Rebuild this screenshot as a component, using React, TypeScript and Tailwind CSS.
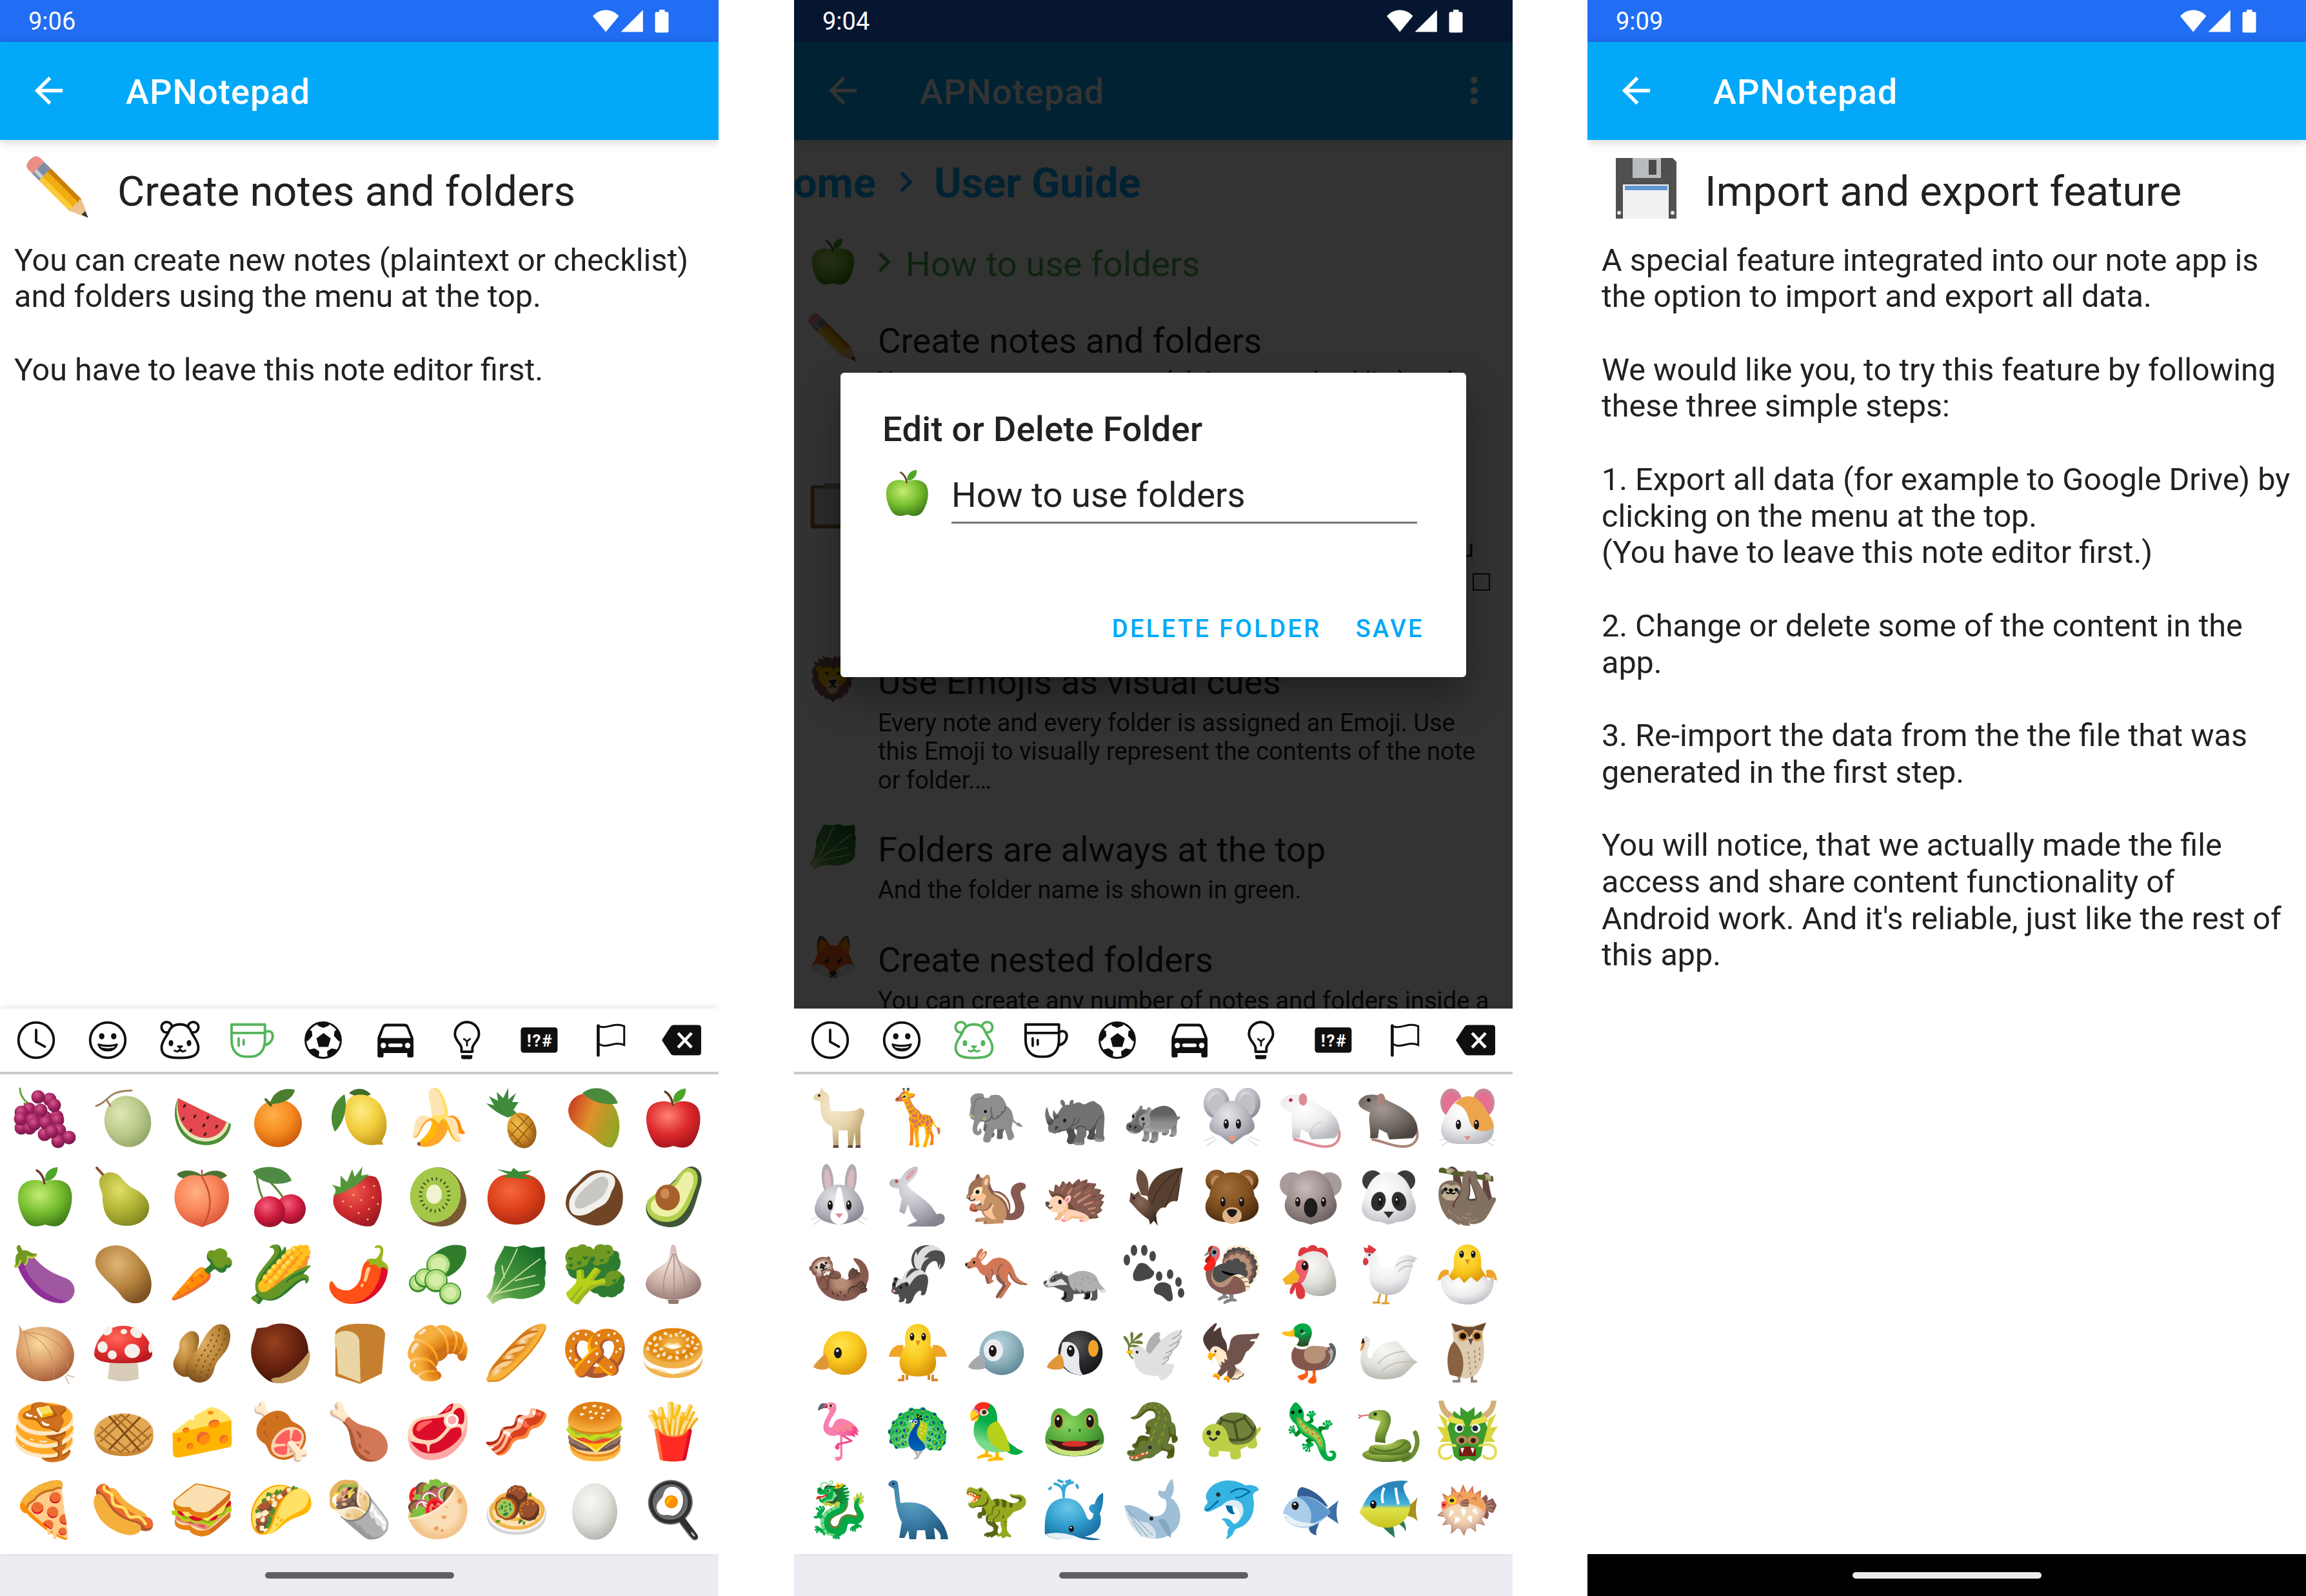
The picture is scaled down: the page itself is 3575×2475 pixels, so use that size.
import React from "react";

const FOOD = [
  "🍇", "🍈", "🍉", "🍊", "🍋", "🍌", "🍍", "🥭", "🍎",
  "🍏", "🍐", "🍑", "🍒", "🍓", "🥝", "🍅", "🥥", "🥑",
  "🍆", "🥔", "🥕", "🌽", "🌶️", "🥒", "🥬", "🥦", "🧄",
  "🧅", "🍄", "🥜", "🌰", "🍞", "🥐", "🥖", "🥨", "🥯",
  "🥞", "🧇", "🧀", "🍖", "🍗", "🥩", "🥓", "🍔", "🍟",
  "🍕", "🌭", "🥪", "🌮", "🌯", "🥙", "🧆", "🥚", "🍳",
];

const ANIMALS = [
  "🦙", "🦒", "🐘", "🦏", "🦛", "🐭", "🐁", "🐀", "🐹",
  "🐰", "🐇", "🐿️", "🦔", "🦇", "🐻", "🐨", "🐼", "🦥",
  "🦦", "🦨", "🦘", "🦡", "🐾", "🦃", "🐔", "🐓", "🐣",
  "🐤", "🐥", "🐦", "🐧", "🕊️", "🦅", "🦆", "🦢", "🦉",
  "🦩", "🦚", "🦜", "🐸", "🐊", "🐢", "🦎", "🐍", "🐲",
  "🐉", "🦕", "🦖", "🐳", "🐋", "🐬", "🐟", "🐠", "🐡",
];

/* Shading used by the drawn emoji: id, highlight, middle tone, edge tone. */
const SHADES: [string, string, string, string][] = [
  ["grape", "#d4588e", "#a3225f", "#6f1648"],
  ["melon", "#dfe6b4", "#bccb8c", "#90a565"],
  ["orange", "#ffb04a", "#f58a1f", "#c9590b"],
  ["lemon", "#fdec86", "#f2ce3b", "#c79c22"],
  ["pine", "#f6c24c", "#d18f27", "#8f5516"],
  ["redapple", "#ff8272", "#dd2a2c", "#a3131d"],
  ["greenapple", "#c4ec74", "#77be2e", "#3f7d1c"],
  ["pear", "#e0de6a", "#b3b536", "#83891f"],
  ["peach", "#ffb184", "#f88256", "#d65138"],
  ["cherry", "#f4617a", "#d11c40", "#8f0f28"],
  ["straw", "#ef5b50", "#d02c30", "#9c1a22"],
  ["tomato", "#f5683b", "#dc4019", "#a82a10"],
  ["potato", "#dfb678", "#b8843f", "#7d5323"],
  ["garlic", "#efdfd8", "#cdb2a9", "#967a75"],
  ["onion", "#fbdc9f", "#d99a68", "#a35a36"],
  ["mush", "#ff6a5a", "#e83232", "#b81a20"],
  ["nut", "#e0b065", "#b98436", "#74491a"],
  ["chestnut", "#96401f", "#6b2410", "#3f1208"],
  ["egg", "#f8f8f4", "#e2e1dc", "#b3b1ab"],
  ["mouse", "#e6e6ea", "#b9b8c0", "#86858f"],
  ["rat", "#a39a93", "#756d67", "#4b4541"],
  ["cream", "#f8ecd0", "#e6d3a8", "#b89d6c"],
  ["white", "#ffffff", "#ececee", "#b9b9bf"],
  ["bear", "#a36d3c", "#80501f", "#4e2d10"],
  ["bat", "#8b6a58", "#5e4438", "#36261f"],
  ["koala", "#c9bcba", "#9b8c8b", "#6c5f60"],
  ["yellow", "#ffe54d", "#f8c61d", "#d9930c"],
  ["bluebird", "#bcd6de", "#8db2bd", "#5c8593"],
  ["black", "#555759", "#2c2d2f", "#151617"],
  ["frog", "#8cd45f", "#55ac3c", "#347a2a"],
  ["whale", "#6cc7ea", "#2e9bca", "#17689c"],
  ["dino", "#62a5c8", "#3b7fa8", "#225a80"],
  ["snake", "#b5cc5c", "#7ea03a", "#4c6b20"],
];

function Shades() {
  return (
    <svg className="absolute" width="0" height="0">
      <defs>
        {SHADES.map(([id, a, b, c]) => (
          <radialGradient key={id} id={id} cx="0.4" cy="0.32" r="0.72">
            <stop offset="0" stopColor={a} />
            <stop offset="0.55" stopColor={b} />
            <stop offset="1" stopColor={c} />
          </radialGradient>
        ))}
        <linearGradient id="mango" x1="0" y1="0.2" x2="1" y2="0.6">
          <stop offset="0" stopColor="#c93a22" />
          <stop offset="0.45" stopColor="#e0902a" />
          <stop offset="1" stopColor="#8fa624" />
        </linearGradient>
        <linearGradient id="fish" x1="0" y1="0" x2="0" y2="1">
          <stop offset="0" stopColor="#1f85c4" />
          <stop offset="0.42" stopColor="#49b2dc" />
          <stop offset="0.52" stopColor="#dfe24a" />
          <stop offset="1" stopColor="#c9c41f" />
        </linearGradient>
        <linearGradient id="leaf" x1="0" y1="1" x2="1" y2="0">
          <stop offset="0" stopColor="#cfe0a4" />
          <stop offset="0.3" stopColor="#4f9d3f" />
          <stop offset="1" stopColor="#0c6322" />
        </linearGradient>
      </defs>
    </svg>
  );
}

function Eye({ x, y, rx = 4, ry = 7.5 }: { x: number; y: number; rx?: number; ry?: number }) {
  return (
    <g>
      <ellipse cx={x} cy={y} rx={rx} ry={ry} fill="#1b1716" />
      <ellipse cx={x - 0.8} cy={y - ry * 0.4} rx={rx * 0.35} ry={ry * 0.25} fill="#ffffff" />
    </g>
  );
}

function Apple({ fill }: { fill: string }) {
  return (
    <g>
      <path d="M47 25C36 18 18 20 10 30 1 42 5 66 15 82 23 95 34 94 47 90 60 94 71 95 79 82 89 66 92 42 84 30 76 20 58 18 47 25Z" fill={`url(#${fill})`} />
      <path d="M46 26C45 17 40 9 34 6" stroke="#6b3d22" strokeWidth="3.5" fill="none" strokeLinecap="round" />
      <path d="M47 23C45 10 54 2 66 1 67 12 60 22 47 23Z" fill="#4ea52a" />
    </g>
  );
}

function Rodent({ fill, eye, tail }: { fill: string; eye: string; tail: string }) {
  return (
    <g>
      <path d="M22 80C42 84 60 94 78 90 90 86 94 76 90 64" stroke={tail} strokeWidth="4" fill="none" strokeLinecap="round" />
      <path d="M0 23C4 12 16 8 32 12 46 22 70 28 84 44 94 58 94 70 84 78L48 80 44 70 32 64 30 78 18 78C20 62 14 50 18 38 8 34 0 30 0 23Z" fill={`url(#${fill})`} />
      <path d="M46 78C46 62 54 54 66 52" stroke="#8888882f" strokeWidth="2.5" fill="none" />
      <ellipse cx="35" cy="18" rx="6.5" ry="9.5" fill={tail} />
      <circle cx="16" cy="19" r="2.8" fill={eye} />
    </g>
  );
}

const whiskers = <path d="M20 76 3 82M22 80 7 90M74 76 91 82M72 80 87 90" stroke="#cfcfcf" strokeWidth="1.3" />;

const ART: Record<string, React.ReactNode> = {
  "🍇": (
    <g>
      <path d="M8 1C8 15 18 24 34 32M15 24 18 34" stroke="#6ba33b" strokeWidth="3" fill="none" strokeLinecap="round" />
      {[[23, 33], [11, 38], [48, 46], [66, 45], [55, 18], [37, 14], [62, 27], [41, 35], [11, 62], [24, 62], [10, 48], [28, 50], [47, 72], [31, 56], [49, 54], [67, 50], [70, 66], [85, 77], [68, 83], [58, 68]].map(([x, y]) => (
        <circle key={`${x}-${y}`} cx={x - 1} cy={y} r="10.5" fill="url(#grape)" />
      ))}
    </g>
  ),
  "🍈": (
    <g>
      <ellipse cx="53" cy="52" rx="36" ry="40" transform="rotate(-15 53 52)" fill="url(#melon)" />
      <path d="M4 28C15 26 22 14 32 9S52 5 59 4M20 18 26 28" stroke="#a5805a" strokeWidth="3" fill="none" strokeLinecap="round" />
    </g>
  ),
  "🍉": (
    <g>
      <path d="M10 16 92 56C90 82 62 96 34 85 8 74-2 42 10 16Z" fill="#4d8f38" />
      <path d="M10 16 89 55C84 78 60 89 36 80 12 70 3 42 10 16Z" fill="#e6e6b8" />
      <path d="M10 16 85 53C79 73 59 83 39 75 17 66 6 42 10 16Z" fill="#e5484f" />
      {[[20, 28], [18, 48], [36, 44], [56, 46], [50, 58], [30, 66], [52, 72], [70, 60]].map(([x, y]) => (
        <ellipse key={`${x}-${y}`} cx={x} cy={y} rx="1.8" ry="3.2" fill="#4a1a1c" transform={`rotate(30 ${x} ${y})`} />
      ))}
    </g>
  ),
  "🍊": (
    <g>
      <circle cx="43" cy="55" r="37" fill="url(#orange)" />
      <path d="M31 25C33 8 50-2 69 3 67 16 52 25 31 25Z" fill="#4b7e2f" />
      <path d="M24 18 32 27" stroke="#3f6b26" strokeWidth="4" strokeLinecap="round" />
    </g>
  ),
  "🍋": (
    <g>
      <path d="M31 8C42-2 56 0 65 10 54 16 42 15 31 8Z" fill="#3f6d2a" />
      <path d="M34 14C50 6 72 12 82 30 92 48 92 68 82 82L84 88 74 88C56 92 38 82 29 62 22 44 22 24 34 14Z" fill="url(#lemon)" />
      <path d="M24 10C6 22-2 44 9 68 22 56 30 32 24 10Z" fill="#4b8a34" />
    </g>
  ),
  "🍍": (
    <g>
      <path d="M34 46C20 42 8 32 0 24L12 27 4 13 18 20 16 6 26 16 34 0 34 18 46 8 40 22 50 22 42 34 48 40Z" fill="#3f8a3d" />
      <ellipse cx="55" cy="66" rx="22" ry="28" transform="rotate(-18 55 66)" fill="url(#pine)" />
      <path d="M38 52 70 84M48 42 76 70M34 66 58 92M44 88 72 54M36 76 66 44" stroke="#8f5a17" strokeWidth="1.5" />
    </g>
  ),
  "🥭": (
    <g>
      <path d="M26 10C46 2 70 14 80 34 88 52 88 76 74 92 60 94 52 82 38 72 20 62 6 52 6 34 8 20 16 13 26 10Z" fill="url(#mango)" />
      <path d="M28 8C46-6 74 0 83 24 62 28 42 22 28 8Z" fill="#4a8a3c" />
    </g>
  ),
  "🍎": <Apple fill="redapple" />,
  "🍏": <Apple fill="greenapple" />,
  "🍐": (
    <g>
      <path d="M10 18C16 8 30 6 40 14 48 22 52 30 66 36 84 46 92 62 82 78 72 92 50 96 32 88 16 78 14 60 14 46 13 36 6 28 10 18Z" fill="url(#pear)" />
      <path d="M14 12 5 2" stroke="#8a4f2d" strokeWidth="4" strokeLinecap="round" />
    </g>
  ),
  "🍑": (
    <g>
      <path d="M47 14C36 4 16 4 8 12 16 22 34 22 47 14ZM47 14C58 4 78 4 86 14 74 24 58 22 47 14Z" fill="#4c7330" />
      <path d="M47 16C34 10 16 14 8 30 0 50 6 74 26 86L47 94 68 86C88 74 93 50 86 30 78 14 60 10 47 16Z" fill="url(#peach)" />
      <path d="M47 5V16C62 40 64 66 49 92" stroke="#c84e32" strokeWidth="2.5" fill="none" />
    </g>
  ),
  "🍒": (
    <g>
      <path d="M10 12C12 36 18 46 22 56M20 14C36 28 46 40 52 50" stroke="#5c8a35" strokeWidth="3" fill="none" />
      <path d="M4 8C20-4 56-2 64 22 42 32 14 26 4 8Z" fill="#4f8a45" />
      <circle cx="63" cy="66" r="23" fill="url(#cherry)" />
      <circle cx="30" cy="70" r="24" fill="url(#cherry)" />
    </g>
  ),
  "🍓": (
    <g>
      <path d="M14 36C32 20 62 8 74 18 86 36 84 72 70 90 60 98 32 88 14 72 4 60 4 46 14 36Z" fill="url(#straw)" />
      <path d="M6 46C12 40 12 34 4 28L18 32 18 14 28 24 36 4 40 16 52 0 50 14 62 12C50 26 30 38 6 46Z" fill="#54963a" />
      {[[22, 54], [38, 44], [54, 32], [70, 30], [34, 62], [50, 52], [68, 48], [46, 72], [62, 66], [76, 58], [60, 82]].map(([x, y]) => (
        <circle key={`${x}-${y}`} cx={x} cy={y} r="1.5" fill="#f5c06a" />
      ))}
    </g>
  ),
  "🥝": (
    <g>
      <path d="M40 2C66-4 88 22 91 52 92 76 74 94 50 93 34 92 20 84 14 74Z" fill="#7a5a35" />
      <ellipse cx="43" cy="44" rx="39" ry="43" transform="rotate(16 43 44)" fill="#a5c84a" />
      <ellipse cx="42" cy="44" rx="22" ry="25" fill="none" stroke="#3f4d1c" strokeWidth="5" strokeDasharray="2 5" />
      <ellipse cx="41" cy="43" rx="12" ry="15" fill="#f1f3d0" />
    </g>
  ),
  "🍅": (
    <g>
      <path d="M46 14C66 8 88 18 91 44 93 74 70 90 46 90S-1 74 2 44C5 18 26 8 46 14Z" fill="url(#tomato)" />
      <path d="M46 18 24 16 34 12 16 4 38 8 42 2 50 8 70 6 58 14 72 20Z" fill="#3f8a34" />
    </g>
  ),
  "🥥": (
    <g>
      <path d="M60 6C84 8 94 34 90 58 84 86 58 98 34 88 12 80 2 70 2 56 4 34 14 34 24 22 36 8 48 4 60 6Z" fill="#6f4526" />
      <path d="M66 10C78 12 82 22 76 34 70 42 72 54 56 62 42 68 38 76 22 76 8 76 6 62 8 52 14 36 24 28 36 18 46 10 56 8 66 10Z" fill="#f2f0ec" />
      <path d="M62 16C72 20 68 32 64 38 60 50 48 54 38 60 28 66 18 68 16 60 16 46 28 36 40 26 48 20 54 14 62 16Z" fill="#c9c7c3" />
    </g>
  ),
  "🥑": (
    <g>
      <path d="M76 0C90 2 94 18 88 34 80 58 76 92 44 94 16 94-4 74 8 52 22 38 34 36 50 20 58 8 66 0 76 0Z" fill="#3f5538" />
      <path d="M72 2C84 4 88 16 82 32 74 54 66 84 38 86 10 86 0 66 8 52 20 38 36 36 50 22 56 10 64 2 72 2Z" fill="#b3cf4c" />
      <path d="M70 8C79 10 80 20 76 32 66 54 60 76 36 78 14 76 8 64 14 54 26 42 40 40 54 26 60 14 64 8 70 8Z" fill="#edf0a6" />
      <ellipse cx="38" cy="48" rx="19" ry="20" fill="#a5602c" />
      <ellipse cx="34" cy="42" rx="7" ry="8" fill="#cf8c52" />
    </g>
  ),
  "🥔": <path d="M20 4C42-4 60 6 74 24 90 40 96 70 82 84 70 96 50 92 42 78 30 62 12 52 4 34 0 20 8 8 20 4Z" fill="url(#potato)" />,
  "🥒": (
    <g>
      <path d="M34 22C50 2 74-4 90 4 94 20 84 40 62 50Z" fill="#2f7d2c" />
      {[[48, 32, 19], [16, 60, 14], [26, 52, 15], [44, 56, 18], [66, 76, 17]].map(([x, y, r]) => (
        <g key={`${x}-${y}`}>
          <ellipse cx={x} cy={y} rx={r} ry={r} fill="#3f8c2f" />
          <ellipse cx={x} cy={y - 1} rx={r - 2} ry={r - 2.5} fill="#b4de82" />
          <ellipse cx={x} cy={y - 1} rx={r - 7} ry={r - 7.5} fill="#d3eda6" />
        </g>
      ))}
    </g>
  ),
  "🥬": (
    <g>
      <path d="M28 2 46 4 58 1 70 5 90 3C92 14 88 20 93 28 90 36 94 44 90 52 92 60 92 68 84 74 76 80 60 86 48 84 36 82 22 82 10 93L0 80C14 66 8 56 14 44 8 32 24 14 28 2Z" fill="url(#leaf)" />
      <path d="M6 86C20 62 36 36 48 6M12 78C36 60 62 36 84 22M14 76C40 70 60 66 82 62M28 52 24 32M44 56 76 48" stroke="#c8dca0" strokeWidth="2" fill="none" />
    </g>
  ),
  "🧄": (
    <g>
      <path d="M46 0C54 2 50 14 56 24 66 36 90 42 90 62 88 78 70 84 47 86 24 84 6 78 4 62 4 42 30 36 38 24 44 14 40 4 46 0Z" fill="url(#garlic)" />
      <path d="M46 14C40 34 26 50 34 84M50 14C56 34 70 50 62 84M48 14V86" stroke="#a88a86" strokeWidth="1.5" fill="none" />
      <path d="M38 86H56L54 92H40Z" fill="#8f7a6a" />
    </g>
  ),
  "🧅": (
    <g>
      <path d="M6 2 12 12 24 8C60-2 90 18 92 48 92 74 70 90 46 90 20 90 2 70 2 46 2 32 10 20 6 2Z" fill="url(#onion)" />
      <path d="M14 14C44 24 66 50 60 88M14 14C22 40 24 64 34 88M14 14C56 14 84 40 82 70" stroke="#c98a5c" strokeWidth="1.1" fill="none" />
      <path d="M80 80 92 84M78 82 84 94" stroke="#c9b39c" strokeWidth="1.5" />
    </g>
  ),
  "🍄": (
    <g>
      <path d="M26 54H68L70 86Q48 94 22 86Z" fill="#d8cbb8" />
      <path d="M46 4C72 4 90 26 91 48 90 60 70 62 46 62S2 60 1 48C2 26 20 4 46 4Z" fill="url(#mush)" />
      <ellipse cx="22" cy="12" rx="8" ry="6" fill="#f5f0ea" transform="rotate(-40 22 12)" />
      <ellipse cx="47" cy="13" rx="5" ry="4" fill="#f5f0ea" />
      <ellipse cx="66" cy="15" rx="10" ry="7" fill="#f5f0ea" transform="rotate(35 66 15)" />
      <ellipse cx="14" cy="37" rx="8" ry="9" fill="#f5f0ea" />
      <ellipse cx="60" cy="43" rx="12" ry="11" fill="#f5f0ea" />
      <circle cx="29" cy="49" r="7" fill="#f5f0ea" />
      <ellipse cx="88" cy="38" rx="3" ry="8" fill="#f5f0ea" />
    </g>
  ),
  "🥜": (
    <g>
      <path d="M20 18C32 6 46 14 42 32 38 48 34 52 36 70 32 88 14 86 6 74-4 58 12 48 12 36 12 28 14 24 20 18Z" fill="url(#nut)" />
      <path d="M62 8C76-6 96 4 90 28 86 50 70 52 66 72 60 96 34 98 24 80 14 60 34 50 42 38 48 28 50 20 62 8Z" fill="url(#nut)" />
      <path d="M74 8C74 36 50 46 44 86M84 14C80 44 58 54 54 86M64 16C60 38 40 50 34 80" stroke="#7c4f1c" strokeWidth="2" strokeDasharray="4 5" fill="none" />
    </g>
  ),
  "🌰": (
    <g>
      <path d="M10 8 26 6C44-4 70 0 82 16 92 30 94 60 82 76 66 92 46 96 30 90 10 78-2 58 2 34Z" fill="url(#chestnut)" />
      <path d="M92 42C96 66 78 94 42 93 28 90 30 84 44 84 62 78 80 60 92 42Z" fill="#c29a5c" />
    </g>
  ),
  "🍞": (
    <g>
      <path d="M10 14C14 4 34 0 50 1 70 0 88 6 87 18L82 78 48 94 10 82Z" fill="#c57f2f" />
      <path d="M10 18C18 8 44 10 47 26L49 92 14 78 12 40Q6 28 10 18Z" fill="#e9d6a4" />
    </g>
  ),
  "🧇": (
    <g>
      <path d="M1 48C2 76 20 84 47 84S93 74 93 50Z" fill="#c98a37" />
      <ellipse cx="47" cy="48" rx="46" ry="30" fill="#e2a853" />
      <path d="M32 22 78 66M42 19 86 58M10 38 56 78M6 50 42 78M56 19 10 62M44 19 5 54M88 38 42 78M90 50 60 78" stroke="#a86a28" strokeWidth="2.5" />
      <path d="M24 22 72 76M72 24 24 74" stroke="#7c4a18" strokeWidth="3" />
    </g>
  ),
  "🥚": <ellipse cx="47" cy="49" rx="35" ry="44" fill="url(#egg)" />,
  "💾": (
    <g>
      <path d="M0 0H88L94 6V94H0Z" fill="#50504e" />
      <path d="M26 0H70V31H26Z" fill="#b9bcbf" />
      <path d="M51 3H63V26H51Z" fill="#4a4a48" />
      <path d="M11 41H82V94H11Z" fill="#f1f1f1" />
      <path d="M14 43H80V50H14Z" fill="#5f97d0" />
      <circle cx="5" cy="85" r="3" fill="#e8e8e8" />
      <circle cx="88" cy="85" r="3" fill="#e8e8e8" />
    </g>
  ),
  "✏️": (
    <g transform="rotate(-45 47 47)">
      <path d="M34-6Q34-16 47-16T60-6V2H34Z" fill="#ec8d86" />
      <path d="M34 2H60V17H34Z" fill="#7e8ea0" />
      <path d="M38 2H44V17H38Z" fill="#c2ccd6" />
      <path d="M34 17H60V84H34Z" fill="#f0ae12" />
      <path d="M34 17H42V84H34Z" fill="#fbc93a" />
      <path d="M53 17H60V84H53Z" fill="#c97f08" />
      <path d="M34 84Q38 80 42 84 47 80 53 84 57 80 60 84L50 106H44Z" fill="#ebc48d" />
      <path d="M43 101H51L47 112Z" fill="#333333" />
    </g>
  ),
  "📋": (
    <g>
      <rect x="2" y="6" width="90" height="86" rx="4" fill="#8f6a34" />
      <rect x="10" y="12" width="74" height="72" fill="#d8d8d8" />
      <rect x="28" y="2" width="38" height="12" rx="3" fill="#9a9a9a" />
    </g>
  ),
  "🦙": (
    <g>
      <path d="M19 0 24 6C32 8 33 16 32 24L34 35C46 37 60 37 72 35 78 33 80 28 86 36 86 44 82 50 80 62L80 91H73L71 68 68 91H61L60 66 46 66 46 91H38L36 60C22 54 18 44 18 22L8 18C5 14 10 8 17 7Z" fill="url(#cream)" />
      <circle cx="16" cy="12" r="2" fill="#2a211a" />
      <path d="M38 89H46V93H37ZM61 89H68V93H60ZM73 89H80V93H72Z" fill="#5a4a38" />
    </g>
  ),
  "🐭": (
    <g>
      <ellipse cx="23" cy="24" rx="20" ry="24" fill="url(#mouse)" />
      <ellipse cx="71" cy="24" rx="20" ry="24" fill="url(#mouse)" />
      <ellipse cx="24" cy="27" rx="13" ry="17" fill="#c4bfc6" />
      <ellipse cx="70" cy="27" rx="13" ry="17" fill="#c4bfc6" />
      {whiskers}
      <path d="M47 20C60 20 70 32 76 44 86 60 84 68 66 74L47 88 28 74C10 68 8 60 18 44 24 32 34 20 47 20Z" fill="url(#mouse)" />
      <Eye x={38} y={56} />
      <Eye x={57} y={56} />
      <ellipse cx="47" cy="78" rx="5" ry="4.5" fill="#e79a80" />
    </g>
  ),
  "🐁": <Rodent fill="white" eye="#c42a3c" tail="#dd8b92" />,
  "🐀": <Rodent fill="rat" eye="#1c1816" tail="#a98578" />,
  "🐹": (
    <g>
      <ellipse cx="22" cy="23" rx="17" ry="22" fill="#c9869a" />
      <ellipse cx="72" cy="23" rx="17" ry="22" fill="#c9869a" />
      <ellipse cx="22" cy="25" rx="13" ry="18" fill="#e5708f" />
      <ellipse cx="72" cy="25" rx="13" ry="18" fill="#e5708f" />
      {whiskers}
      <path d="M47 14C64 14 74 30 80 42 94 62 90 86 62 87H32C4 86 0 62 14 42 20 30 30 14 47 14Z" fill="url(#white)" />
      <path d="M28 24C40 8 60 10 70 26 78 40 88 48 88 62 78 68 64 70 54 60 46 46 50 32 28 24Z" fill="#eda54c" />
      <Eye x={33} y={57} />
      <Eye x={61} y={57} />
      <path d="M42 75H52L47 82Z" fill="#df8a8a" />
    </g>
  ),
  "🐰": (
    <g>
      <ellipse cx="29" cy="20" rx="9" ry="24" fill="#b4abb0" transform="rotate(-6 29 20)" />
      <ellipse cx="65" cy="20" rx="9" ry="24" fill="#b4abb0" transform="rotate(6 65 20)" />
      <ellipse cx="29" cy="22" rx="5" ry="18" fill="#dcb9bf" transform="rotate(-6 29 22)" />
      <ellipse cx="65" cy="22" rx="5" ry="18" fill="#dcb9bf" transform="rotate(6 65 22)" />
      {whiskers}
      <path d="M47 28C68 28 82 46 85 64 86 82 66 88 47 90 28 88 8 82 9 64 12 46 26 28 47 28Z" fill="url(#mouse)" />
      <path d="M44 34Q47 30 50 34L56 66C64 74 62 88 47 90 32 88 30 74 38 66Z" fill="#ffffff" />
      <Eye x={33} y={60} />
      <Eye x={62} y={60} />
      <path d="M41 73H53L47 80Z" fill="#d98a93" />
    </g>
  ),
  "🐇": (
    <g>
      <path d="M20 20C26 8 34 0 46 0 50 10 38 22 30 28 38 40 56 48 68 62L76 74C88 70 92 80 86 88L74 93H30C34 88 40 88 46 84 36 76 34 66 32 58L26 74 18 70 22 50C18 44 18 38 18 34 8 34 0 30 4 22 8 18 14 18 20 20Z" fill="url(#mouse)" />
      <path d="M28 18C32 10 38 5 43 4 42 12 36 18 30 22Z" fill="#e0a0a4" />
      <circle cx="14" cy="23" r="2.5" fill="#c1453f" />
    </g>
  ),
  "🦇": (
    <g>
      <path d="M24 4C38 8 42 26 38 46L28 44C24 28 16 22 24 4Z" fill="#6b4f40" />
      <path d="M38 44C42 18 60 4 92 2 86 20 88 34 84 54 76 52 70 56 66 64 58 62 54 68 50 78L40 66Z" fill="#57402f" />
      <path d="M92 2C70 14 52 34 44 60M92 2C84 22 74 40 66 62M92 2 84 52" stroke="#3a291f" strokeWidth="1.5" fill="none" />
      <path d="M12 40 18 44 24 38 28 46C40 50 52 66 52 82L54 92 48 84 42 90 40 82C26 74 18 62 10 54Z" fill="url(#bat)" />
      <circle cx="17" cy="49" r="1.8" fill="#120d0a" />
    </g>
  ),
  "🐻": (
    <g>
      <circle cx="23" cy="22" r="17" fill="url(#bear)" />
      <circle cx="71" cy="22" r="17" fill="url(#bear)" />
      <circle cx="24" cy="24" r="10" fill="#b98a5c" />
      <circle cx="70" cy="24" r="10" fill="#b98a5c" />
      <path d="M47 9C70 9 80 28 82 46 94 62 90 82 60 86H34C4 82 0 62 12 46 14 28 24 9 47 9Z" fill="url(#bear)" />
      <ellipse cx="47" cy="76" rx="15" ry="13" fill="#dcb487" />
      <Eye x={33} y={55} />
      <Eye x={62} y={55} />
      <path d="M39 68Q47 64 55 68 54 76 47 79 40 76 39 68Z" fill="#1b1716" />
    </g>
  ),
  "🐨": (
    <g>
      <circle cx="18" cy="28" r="19" fill="#a89b9b" />
      <circle cx="76" cy="28" r="19" fill="#a89b9b" />
      <path d="M47 6C70 6 82 28 84 48 94 66 80 84 60 86L47 90 34 86C14 84 0 66 10 48 12 28 24 6 47 6Z" fill="url(#koala)" />
      <Eye x={27} y={55} />
      <Eye x={67} y={55} />
      <ellipse cx="47" cy="64" rx="10.5" ry="15" fill="#1e1c1d" />
    </g>
  ),
  "🐼": (
    <g>
      <circle cx="22" cy="22" r="16" fill="#3c3c3e" />
      <circle cx="72" cy="22" r="16" fill="#3c3c3e" />
      <path d="M47 9C70 9 80 28 84 46 94 66 90 84 60 86L47 90 34 86C4 84 0 66 10 46 14 28 24 9 47 9Z" fill="url(#white)" />
      <ellipse cx="31" cy="54" rx="11" ry="15" fill="#2e2e30" transform="rotate(15 31 54)" />
      <ellipse cx="63" cy="54" rx="11" ry="15" fill="#2e2e30" transform="rotate(-15 63 54)" />
      <Eye x={34} y={54} />
      <Eye x={60} y={54} />
      <path d="M39 70H55L47 80Z" fill="#2e2e30" />
    </g>
  ),
  "🐾": (
    <g fill="#474747">
      <path d="M22 32C26 26 36 28 40 34L48 42C50 48 42 54 36 54 28 58 16 58 16 52 14 44 18 40 22 32Z" />
      <ellipse cx="6" cy="24" rx="5" ry="8.5" />
      <ellipse cx="17" cy="9" rx="5" ry="8.5" />
      <ellipse cx="33" cy="9" rx="5" ry="8.5" />
      <ellipse cx="46" cy="18" rx="5" ry="8" />
      <path d="M52 62C58 56 70 58 74 64L76 74C78 82 78 88 72 88 66 88 64 80 56 78 46 76 46 68 52 62Z" />
      <ellipse cx="56" cy="49" rx="5" ry="7.5" />
      <ellipse cx="73" cy="46" rx="5" ry="7.5" />
      <ellipse cx="86" cy="58" rx="5" ry="7.5" />
      <ellipse cx="90" cy="75" rx="5" ry="7.5" />
    </g>
  ),
  "🐔": (
    <g>
      <path d="M28 18C26 8 34 0 42 6 46-2 56 0 58 6 66 2 74 8 74 20Z" fill="#e0393f" />
      <path d="M26 26C34 8 62 4 74 22 84 38 90 60 84 72 70 84 46 82 34 70 22 56 20 40 26 26Z" fill="url(#egg)" />
      <path d="M26 26C40 18 48 30 42 44 38 56 34 62 28 60 20 50 22 36 26 26Z" fill="#ec6069" />
      <path d="M22 38 3 54 8 62 24 62 30 50Z" fill="#f1b527" />
      <path d="M20 60C10 74 16 82 20 74L24 66C22 84 32 90 38 80 40 70 34 64 30 58Z" fill="#e0393f" />
      <Eye x={38} y={33} rx={5} ry={7} />
    </g>
  ),
  "🐓": (
    <g>
      <path d="M34 76 30 90M44 76 42 90M22 90H34M36 91H48" stroke="#e09a2c" strokeWidth="3" fill="none" />
      <path d="M10 14C18 8 28 12 30 22 34 36 44 42 58 30 62 16 76 12 92 22 82 24 86 34 80 46 78 66 62 80 44 78 22 76 14 58 18 38Z" fill="url(#white)" />
      <path d="M58 34C64 26 76 22 88 26M62 42C68 34 76 32 84 34" stroke="#b8b8bd" strokeWidth="1.5" fill="none" />
      <path d="M10 12 8 4 14 6 16 0 22 4 28 8 22 14ZM10 20C4 26 8 34 12 32 18 28 16 22 10 20Z" fill="#dd3a40" />
      <circle cx="17" cy="16" r="1.8" fill="#222222" />
    </g>
  ),
  "🐣": (
    <g>
      <path d="M18 40C8 36 2 44 1 56L18 50ZM76 40C86 36 92 44 93 56L76 50Z" fill="#f0a52a" />
      <path d="M16 60C16 46 26 42 26 32 24 10 34 0 47 0S70 10 68 32C68 42 78 46 78 60Z" fill="url(#yellow)" />
      <path d="M6 52 16 46 24 56 34 50 42 60 52 50 62 58 72 48 80 56 88 50C90 78 70 93 47 93S4 78 6 52Z" fill="url(#white)" />
      <Eye x={38} y={15} rx={3.5} ry={5.5} />
      <Eye x={56} y={15} rx={3.5} ry={5.5} />
      <path d="M43 23H51L47 31Z" fill="#e08a1c" />
    </g>
  ),
  "🐤": (
    <g>
      <circle cx="56" cy="46" r="34" fill="url(#yellow)" />
      <path d="M25 47C16 56 8 64 7 68 14 73 24 73 30 70Q32 58 25 47Z" fill="#e0973a" />
      <Eye x={45} y={46} rx={6} ry={8.5} />
    </g>
  ),
  "🐥": (
    <g>
      <path d="M24 80V88H16M30 80V88M70 80V88H78M64 80V88" stroke="#d9892a" strokeWidth="4" fill="none" />
      <path d="M24 34C12 32 4 40 2 52L26 52ZM70 34C82 32 90 40 92 52L68 52Z" fill="#f0a52a" />
      <path d="M28 34C24 12 34 1 47 1S70 12 66 34C78 52 78 70 68 78 58 84 36 84 26 78 16 70 16 52 28 34Z" fill="url(#yellow)" />
      <Eye x={38} y={21} rx={3.5} ry={6} />
      <Eye x={56} y={21} rx={3.5} ry={6} />
      <path d="M43 27H51L47 35Z" fill="#e08a1c" />
    </g>
  ),
  "🐦": (
    <g>
      <circle cx="56" cy="46" r="34.5" fill="url(#bluebird)" />
      <ellipse cx="43" cy="42" rx="15" ry="17" fill="#e9edf0" />
      <path d="M25 47C14 54 5 62 4 68 12 74 22 72 30 70Q32 58 25 47Z" fill="#a7aaad" />
      <Eye x={42} y={43} rx={6} ry={9} />
    </g>
  ),
  "🐧": (
    <g>
      <circle cx="56" cy="46" r="34.5" fill="url(#black)" />
      <path d="M28 30C46 24 56 40 54 58 54 70 56 76 60 80 40 82 26 66 24 52Z" fill="#e8e9ec" />
      <ellipse cx="76" cy="39" rx="8" ry="13" fill="#f2a427" />
      <path d="M25 47C14 54 5 62 4 68 12 74 22 72 30 70Q32 58 25 47Z" fill="#e0973a" />
      <Eye x={41} y={43} rx={6} ry={9} />
    </g>
  ),
  "🦢": (
    <g>
      <path d="M10 20C18 20 20 28 16 38 12 48 14 56 20 54 24 38 40 28 60 28 66 32 66 38 74 42 80 52 86 58 92 60 80 66 76 80 62 84 40 90 12 88 6 70 0 56 6 44 6 34Z" fill="url(#egg)" />
      <path d="M30 64C40 50 56 44 72 44M36 74C50 62 66 58 84 60" stroke="#bdb8ac" strokeWidth="1.5" fill="none" />
      <path d="M8 24 2 44 7 40 10 32Z" fill="#e8843a" />
      <path d="M7 22 4 32 10 30Z" fill="#2b2724" />
    </g>
  ),
  "🦉": (
    <g>
      <path d="M34 80V90H24M54 80V90H62" stroke="#93877a" strokeWidth="4" fill="none" />
      <path d="M22 0 40 4H56L76-1 70 18C74 40 76 62 60 80L46 86 34 84 22 78C16 60 16 40 26 28Z" fill="#dccbb0" />
      <path d="M26 28C14 40 14 66 20 80L36 84C44 66 42 44 26 28Z" fill="#8a6241" />
      <path d="M22 0 44 6 56 6 76-1 70 12 58 10 50 22 40 10 28 14Z" fill="#6b4a31" />
      <path d="M48 44 52 80M58 42 60 72M66 38 66 60" stroke="#a98a66" strokeWidth="2" strokeDasharray="4 4" />
      <circle cx="40" cy="20" r="8" fill="#d88a3a" />
      <circle cx="62" cy="20" r="8" fill="#d88a3a" />
      <circle cx="40" cy="20" r="5" fill="#17120f" />
      <circle cx="62" cy="20" r="5" fill="#17120f" />
      <path d="M48 24H56L52 34Z" fill="#5a4a3d" />
    </g>
  ),
  "🐸": (
    <g>
      <path d="M22 10C34 8 38 22 47 22S60 8 72 10C84 12 84 28 84 36 96 50 94 66 86 74 70 88 24 88 8 74 0 66-2 50 10 36 10 28 10 12 22 10Z" fill="url(#frog)" />
      <path d="M2 64C24 74 70 74 92 64 90 74 70 84 47 84S4 74 2 64Z" fill="#c9e27a" />
      <ellipse cx="22" cy="30" rx="8" ry="12" fill="#b89a3c" />
      <ellipse cx="71" cy="30" rx="8" ry="12" fill="#b89a3c" />
      <Eye x={22} y={30} rx={6} ry={10} />
      <Eye x={71} y={30} rx={6} ry={10} />
      <path d="M7 58C30 64 64 64 87 58 78 72 64 76 47 76S16 72 7 58Z" fill="#3c1814" />
      <ellipse cx="47" cy="65" rx="20" ry="4.5" fill="#d8322a" />
      <ellipse cx="39" cy="44" rx="1.5" ry="2.5" fill="#2b5f22" />
      <ellipse cx="55" cy="44" rx="1.5" ry="2.5" fill="#2b5f22" />
    </g>
  ),
  "🐍": (
    <g>
      <path d="M4 22 0 26M4 22 0 20M16 20 4 22" stroke="#d96a72" strokeWidth="2" />
      <path d="M88 48C96 64 88 86 70 90" stroke="#6b8c30" strokeWidth="7" fill="none" strokeLinecap="round" />
      <ellipse cx="44" cy="82" rx="38" ry="11" fill="url(#snake)" />
      <path d="M30 13C48 10 54 24 48 38 44 50 40 54 42 64L26 62C24 48 32 40 34 30L16 26C14 18 20 13 30 13Z" fill="url(#snake)" />
      <path d="M16 74C18 60 38 72 56 62 68 54 82 58 82 70 80 82 58 84 40 82 26 82 14 82 16 74Z" fill="url(#snake)" />
      <path d="M24 72C40 80 62 76 74 62" stroke="#4f6e22" strokeWidth="2.5" fill="none" />
      <circle cx="26" cy="19" r="2.5" fill="#1b1a12" />
    </g>
  ),
  "🐲": (
    <g>
      <path d="M14 26 2 18 12 40 0 38 10 54 4 62 22 62ZM80 26 92 18 82 40 94 38 84 54 90 62 72 62Z" fill="#d8d63c" />
      <path d="M26 14 36 22 36 8 47 16 58 8 58 22 68 14 78 40 72 62 68 84 58 92 47 88 36 92 26 84 22 62 16 40Z" fill="#3c9a2c" />
      <path d="M2-2C4 16 12 26 30 30L24 18C16 14 12 8 10-2ZM92-2C90 16 82 26 64 30L70 18C78 14 82 8 84-2Z" fill="#d3b078" />
      <path d="M14 30 44 38 40 28 20 22ZM80 30 50 38 54 28 74 22Z" fill="#e6e04a" />
      <ellipse cx="34" cy="41" rx="7" ry="7" fill="#ffffff" />
      <ellipse cx="60" cy="41" rx="7" ry="7" fill="#ffffff" />
      <circle cx="35" cy="41" r="4.5" fill="#1c2a3a" />
      <circle cx="59" cy="41" r="4.5" fill="#1c2a3a" />
      <ellipse cx="38" cy="59" rx="9" ry="7" fill="#b98a58" />
      <ellipse cx="56" cy="59" rx="9" ry="7" fill="#b98a58" />
      <ellipse cx="38" cy="60" rx="4" ry="4" fill="#3c1d14" />
      <ellipse cx="56" cy="60" rx="4" ry="4" fill="#3c1d14" />
      <path d="M34 72Q47 66 60 72V84H34Z" fill="#7a1a14" />
      <path d="M36 72 39 80 42 71ZM52 71 55 80 58 72Z" fill="#ffffff" />
      <path d="M28 68C10 62 0 70 4 82 8 92 20 88 22 84M66 68C84 62 94 70 90 82 86 92 74 88 72 84" stroke="#e3dc55" strokeWidth="4" fill="none" strokeLinecap="round" />
    </g>
  ),
  "🦕": (
    <g>
      <path d="M1 8C2 0 12-2 16 4L20 36C44 32 62 38 74 54 86 66 92 78 94 92H82C84 84 78 78 72 74L74 92H60L58 78H46L44 92H34L32 78 26 90H18L22 66C14 50 12 34 10 14Z" fill="url(#dino)" />
      <circle cx="9" cy="6" r="1.8" fill="#0f1c26" />
    </g>
  ),
  "🐳": (
    <g>
      <path d="M30 26C30 14 26 8 16 6M30 26C30 12 32 6 44 4M30 26V8M10 12 8 14M50 8 52 12M28 3 22 1M34 3 40 1" stroke="#3aa7d6" strokeWidth="4" fill="none" strokeLinecap="round" />
      <path d="M1 84C0 56 2 32 30 28 54 28 60 42 66 58 70 66 76 60 76 52 64 46 70 36 78 38 80 28 86 22 91 20 92 34 90 44 86 52 92 72 82 84 62 88L88 92C70 96 54 90 44 86 36 94 12 94 1 84Z" fill="url(#whale)" />
      <path d="M2 84C16 80 34 82 50 88 40 94 12 94 2 84Z" fill="#e4f0f4" />
      <Eye x={42} y={76} rx={4} ry={5} />
    </g>
  ),
  "🐋": (
    <g>
      <path d="M2 40C14 36 30 46 42 54 56 62 72 50 66 30 56 28 52 22 56 16 62 18 66 18 66 16 68 8 72 2 76-2 80 10 80 18 74 28 88 36 92 56 86 70 78 88 56 94 38 90 18 84 6 62 2 40Z" fill="#9fbfd6" />
      <path d="M2 40C8 56 24 66 38 66 46 72 54 80 50 91 22 92 6 68 2 40Z" fill="#d5e2eb" />
      <path d="M8 52 38 88M6 46 46 86M14 64 30 88" stroke="#8aa7bb" strokeWidth="1.2" />
      <path d="M54 62C60 70 64 82 74 90 76 78 70 66 62 60Z" fill="#83a8c2" />
      <circle cx="44" cy="60" r="3" fill="#1e242a" />
    </g>
  ),
  "🐟": (
    <g>
      <path d="M26 26C26 14 30 12 34 11 54 16 68 30 74 42ZM44 72C44 82 50 84 56 86 54 78 58 74 60 66Z" fill="#335f96" />
      <path d="M72 46 90 32C86 44 86 56 90 68L72 56Z" fill="#3f6ea6" />
      <path d="M4 52C8 32 26 22 44 26 60 30 72 42 78 50 68 62 52 76 32 74 18 72 8 64 6 58L14 56Z" fill="#a9cdea" />
      <path d="M26 26C48 22 66 38 78 50 68 60 56 66 46 68 52 50 44 34 26 26Z" fill="#5d97cc" />
      <path d="M6 60C16 72 36 76 54 68 40 66 24 66 14 56Z" fill="#e6f0f5" />
      <Eye x={23} y={40} rx={5.5} ry={6.5} />
    </g>
  ),
  "🐠": (
    <g>
      <path d="M74 42C82 38 88 32 92 26 88 40 88 52 92 64 86 58 80 56 74 56Z" fill="#a8911f" />
      <path d="M16 24C30 6 56-2 78 2 68 6 68 12 74 24Z" fill="#2a86b8" />
      <path d="M34 68C44 82 54 86 56 90 56 80 54 72 52 66ZM60 66C68 72 72 76 74 80 74 70 70 62 66 60Z" fill="#2f7a56" />
      <path d="M1 50C10 38 10 26 26 16 48 6 74 14 80 36 82 56 66 74 44 74 22 74 12 62 1 50Z" fill="url(#fish)" />
      <path d="M40 12C36 20 36 28 38 36M58 12C58 20 60 28 62 38" stroke="#ffffff" strokeWidth="4" fill="none" />
      <Eye x={23} y={38} rx={5} ry={6.5} />
    </g>
  ),
};

/* Tone tweaks for glyphs drawn by the emoji font. */
const TWEAKS: Record<string, string> = {
  "🦏": "grayscale brightness-75",
  "🦛": "grayscale scale-90",
  "🐘": "brightness-75 scale-90",
  "🐊": "brightness-90",
  "🦥": "brightness-75",
  "🌯": "saturate-75",
};

function Emoji({ char, small }: { char: string; small?: boolean }) {
  const art = ART[char];
  if (art) {
    return (
      <svg className={`shrink-0 overflow-visible ${small ? "size-[73px]" : "size-[94px]"}`} viewBox="0 0 94 94">
        {art}
      </svg>
    );
  }
  return (
    <span className={`block shrink-0 ${small ? "text-[66px] leading-[76px]" : "text-[84px] leading-[96px]"} ${TWEAKS[char] ?? ""}`}>
      {char}
    </span>
  );
}

function StatusBar({ time, className }: { time: string; className: string }) {
  return (
    <div className={`flex h-[65px] shrink-0 items-center justify-between pl-[44px] pr-[76px] text-white ${className}`}>
      <span className="text-[38px] leading-[44px]">{time}</span>
      <svg width="119" height="36" viewBox="0 0 119 36" fill="currentColor">
        <path d="M20.200 34.500 0 10C5.500 4 12.500 0.600 20.200 0.600S35 4 40.400 10Z" />
        <path d="M43.500 34.600 77.800 0.400V34.600Z" />
        <path d="M103 0h8.500v3.600h3.500a2.500 2.500 0 0 1 2.500 2.500v27a2.500 2.500 0 0 1-2.500 2.500H99a2.500 2.500 0 0 1-2.500-2.500V6.100A2.500 2.500 0 0 1 99 3.600h4Z" />
      </svg>
    </div>
  );
}

function AppBar({ menu }: { menu?: boolean }) {
  return (
    <div className="relative flex h-[151.5px] shrink-0 items-center bg-[#03a9f8] pl-[43px] pr-[27px] text-white shadow-[0_3px_14px_rgba(0,0,0,0.18)]">
      <svg width="65" height="65" viewBox="0 0 24 24" fill="currentColor">
        <path d="M20 11H7.830l5.590-5.590L12 4l-8 8 8 8 1.410-1.410L7.830 13H20v-2z" />
      </svg>
      <span className="ml-[87px] mt-[4px] text-[54.2px] font-medium leading-[64px] tracking-[0.019em]">APNotepad</span>
      {menu && (
        <svg className="ml-auto" width="65" height="65" viewBox="0 0 24 24" fill="currentColor">
          <circle cx="12" cy="6" r="2" />
          <circle cx="12" cy="12" r="2" />
          <circle cx="12" cy="18" r="2" />
        </svg>
      )}
    </div>
  );
}

function Chevron({ className }: { className: string }) {
  return (
    <svg className={className} viewBox="8.500 6 7.500 12" fill="currentColor">
      <path d="M10 6 8.590 7.410 13.170 12l-4.580 4.590L10 18l6-6z" />
    </svg>
  );
}

const TAB_ICONS: React.ReactNode[] = [
  <g key="clock" fill="none" stroke="currentColor" strokeWidth="3.8" strokeLinecap="round" strokeLinejoin="round">
    <circle cx="33" cy="33" r="27.3" />
    <path d="M33 17.200V35.700L46.600 43.100" />
  </g>,
  <g key="smile">
    <circle cx="33" cy="33" r="27.3" fill="none" stroke="currentColor" strokeWidth="3.8" />
    <ellipse cx="23.7" cy="27" rx="4.2" ry="4.8" fill="currentColor" />
    <ellipse cx="42.3" cy="27" rx="4.2" ry="4.8" fill="currentColor" />
    <path d="M18.500 39.500Q33 43.500 47.500 39.500 44.500 49.200 33 49.200T18.500 39.500Z" fill="currentColor" stroke="currentColor" strokeWidth="2.6" strokeLinejoin="round" />
    <path d="M21.800 42.200Q33 44.800 44.200 42.200L43 44.300Q33 47 23 44.300Z" fill="white" />
  </g>,
  <g key="bear" fill="white" stroke="currentColor" strokeWidth="3.8" strokeLinecap="round" strokeLinejoin="round">
    <circle cx="12.5" cy="13" r="8.2" />
    <circle cx="53.5" cy="13" r="8.2" />
    <path d="M33 8.500C24.500 8.500 19 12 16 19 12.500 28 4.500 34 4.500 44.500 4.500 57 14 60.500 33 60.500S61.500 57 61.500 44.500C61.500 34 53.500 28 50 19 47 12 41.500 8.500 33 8.500Z" />
    <ellipse cx="19" cy="37.7" rx="3.5" ry="4.6" fill="currentColor" stroke="none" />
    <ellipse cx="47" cy="37.7" rx="3.5" ry="4.6" fill="currentColor" stroke="none" />
    <path d="M29.500 42.500H36.500L33 45Z" fill="currentColor" strokeWidth="2.5" />
    <path d="M24.700 49.300Q29.500 52.300 33 47.500 36.500 52.300 41.300 49.300" fill="none" strokeWidth="3" />
  </g>,
  <g key="cup" fill="none" stroke="currentColor" strokeWidth="3.9" strokeLinecap="round" strokeLinejoin="round">
    <path d="M2 8.800H53.700V33C53.700 49 45 58.600 32 58.600H23.700C10.700 58.600 2 49 2 33Z" />
    <path d="M2 21.900H53.700" />
    <path d="M54.500 20.400C60 17.500 65.800 19.800 65.800 26.500 65.800 34 60 39.800 53.500 40.700" />
    <path d="M13 30V41.800M20.800 32.800V39.800" strokeWidth="3.7" />
  </g>,
  <g key="ball">
    <circle cx="33" cy="33" r="27.4" fill="none" stroke="currentColor" strokeWidth="3" />
    <g fill="currentColor">
      <path d="M33.500 22 44.800 30.300 40.900 43.500H26.100L22.600 30.300Z" />
      <path d="M24.500 6H41.900V10.500L33 14 24.500 10.500Z" />
      <path d="M10.500 16.500 15.500 19 16.200 26.500 9 34.500 5 34Z" />
      <path d="M55.500 16.500 50.500 19 49.800 26.500 57 34.500 61 34Z" />
      <path d="M11.500 47.500 19.800 45.800 27 50.500 26 60 18 57Z" />
      <path d="M54.500 47.500 46.200 45.800 39 50.500 40 60 48 57Z" />
    </g>
  </g>,
  <g key="car">
    <path fillRule="evenodd" fill="currentColor" d="M19 7.600H47Q52 7.600 53.700 12L60 27Q61 29.500 61 32V57.200Q61 59.800 58.400 59.800H54Q51.400 59.800 51.400 57.200V53H14.600V57.200Q14.600 59.800 12 59.800H7.900Q5.300 59.800 5.300 57.200V32Q5.300 29.500 6 27L12.300 12Q14 7.600 19 7.600ZM19.500 11.800Q16.500 11.800 15.300 14.500L9.800 29.700H56.500L50.700 14.500Q49.500 11.800 46.500 11.800ZM24.500 38.300a2.700 2.700 0 0 0 0 5.400H41.500a2.700 2.700 0 0 0 0-5.400Z" />
    <circle cx="14.3" cy="41.2" r="4.2" fill="white" />
    <circle cx="52" cy="41.2" r="4.2" fill="white" />
  </g>,
  <g key="bulb" fill="none" stroke="currentColor" strokeWidth="3.9" strokeLinecap="round" strokeLinejoin="round">
    <path d="M24.500 51V46C24.500 38 14.300 34.500 14.300 23.600A18.600 18.600 0 0 1 51.500 23.600C51.500 34.500 41.300 38 41.300 46V51Z" />
    <path d="M28.300 31.200 33 34.800 37.700 31.200M33 34.800V41.600" strokeWidth="2.8" />
    <path d="M24 56.300H41.200V59.300Q41.200 62.500 38 62.500H27.200Q24 62.500 24 59.300Z" fill="currentColor" stroke="none" />
  </g>,
  <g key="symbols">
    <rect x="4.4" y="13.2" width="57" height="39.4" rx="4.5" fill="currentColor" />
    <text x="33.2" y="42.6" textAnchor="middle" textLength="39" fontSize="26" fontWeight="700" fill="white">!?#</text>
  </g>,
  <g key="flag" fill="none" stroke="currentColor" strokeLinecap="round">
    <path d="M13.400 10.500V56.500" strokeWidth="4.6" />
    <path d="M15.500 11.800C27 16.500 38 4.500 53.700 11.300V40.500C38 34 27 46.500 15.500 39.500" strokeWidth="3" />
  </g>,
  <g key="delete">
    <path d="M1 33 14 13Q16.200 9.600 19.500 9.600H57.500Q62 9.600 62 14V52Q62 56.500 57.500 56.500H19.500Q16.200 56.500 14 53Z" fill="currentColor" />
    <path d="M26.200 22 47.200 44.300M47.200 22 26.200 44.300" stroke="white" strokeWidth="4.6" />
  </g>,
];

function EmojiKeyboard({ active, items }: { active: number; items: string[] }) {
  return (
    <div className="relative flex h-[846px] shrink-0 flex-col bg-white shadow-[0_-2px_10px_rgba(0,0,0,0.1)]">
      <div className="flex h-[98px] items-center">
        {TAB_ICONS.map((icon, i) => (
          <div key={i} className={`flex flex-1 justify-center ${i === active ? "text-[#55b45b]" : "text-[#0f0f0f]"}`}>
            <svg className="overflow-visible" width="66" height="66" viewBox="0 0 66 66">
              {icon}
            </svg>
          </div>
        ))}
      </div>
      <div className="h-[4px] bg-[#cbcbcb]" />
      <div className="grid grid-cols-9 px-[9px] pt-[7px]">
        {items.map((e) => (
          <div key={e} className="flex h-[121.7px] items-center justify-center">
            <Emoji char={e} />
          </div>
        ))}
      </div>
    </div>
  );
}

function NavBar({ dark }: { dark?: boolean }) {
  return (
    <div className={`flex h-[65px] shrink-0 items-start justify-center pt-[28px] ${dark ? "bg-black" : "bg-[#edecf3]"}`}>
      <div className={`h-[10px] w-[293px] rounded-full ${dark ? "bg-[#ebebeb]" : "bg-[#5f5f61]"}`} />
    </div>
  );
}

function Note({ emoji, title, body }: { emoji: string; title: string; body: string }) {
  return (
    <div className="flex min-h-0 flex-1 flex-col bg-white">
      <div className="flex h-[159px] items-start">
        <div className="flex h-[150px] w-[182px] items-center justify-center">
          <Emoji char={emoji} />
        </div>
        <h1 className="mt-[42px] text-[65px] leading-[76px]">{title}</h1>
      </div>
      <p className="whitespace-pre pl-[22px] text-[48.5px] leading-[56.740px]">{body}</p>
    </div>
  );
}

function ListItem({ emoji, title, lines = [], folder, className, children }: {
  emoji: string;
  title: string;
  lines?: string[];
  folder?: boolean;
  className: string;
  children?: React.ReactNode;
}) {
  return (
    <div className={`flex shrink-0 items-start ${className}`}>
      <div className="flex h-[55px] w-[130px] items-center justify-center pr-[10px]">
        <Emoji char={emoji} small />
      </div>
      <div className="flex flex-col gap-[9.300px] whitespace-pre">
        <div className={`flex h-[63.500px] items-center text-[54.5px] leading-[63.500px] ${folder ? "text-[#4caf50]" : ""}`}>
          {folder && <Chevron className="mr-[22px] mt-[-5px] h-[31px] w-[21px]" />}
          {title}
        </div>
        {lines.length > 0 && (
          <div className="text-[38px] leading-[44.350px]">
            {lines.map((l) => (
              <div key={l}>{l}</div>
            ))}
          </div>
        )}
        {children}
      </div>
    </div>
  );
}

function Dialog() {
  return (
    <div className="absolute left-[72px] top-[578px] flex h-[471.500px] w-[970px] flex-col rounded-[6px] bg-white pl-[65px] pr-[65px] text-[#212121] shadow-[0_30px_60px_rgba(0,0,0,0.35)]">
      <h2 className="mt-[56px] text-[54.2px] font-medium leading-[63.500px] tracking-[0.006em]">Edit or Delete Folder</h2>
      <div className="mt-[38px] flex items-start">
        <div className="flex h-[57px] w-[77px] items-center justify-center">
          <Emoji char="🍏" small />
        </div>
        <div className="ml-[30px] h-[76px] w-[722px] border-b-[3px] border-[#757575] text-[54.4px] leading-[63.500px]">How to use folders</div>
      </div>
      <div className="mt-[141px] flex justify-end gap-[53px] text-[38px] font-medium leading-[44px] tracking-[0.09em] text-[#03a9f8]">
        <button>DELETE FOLDER</button>
        <button>SAVE</button>
      </div>
    </div>
  );
}

const EXPORT_TEXT = `A special feature integrated into our note app is
the option to import and export all data.

We would like you, to try this feature by following
these three simple steps:

1. Export all data (for example to Google Drive) by
clicking on the menu at the top.
(You have to leave this note editor first.)

2. Change or delete some of the content in the
app.

3. Re-import the data from the the file that was
generated in the first step.

You will notice, that we actually made the file
access and share content functionality of
Android work. And it's reliable, just like the rest of
this app.`;

const CREATE_TEXT = `You can create new notes (plaintext or checklist)
and folders using the menu at the top.

You have to leave this note editor first.`;

export default function App() {
  return (
    <div className="flex h-[2475px] w-[3575px] justify-between bg-white font-['Roboto','Noto_Color_Emoji',sans-serif] text-[#212121]">
      <Shades />
      <section className="flex w-[1114px] flex-col overflow-hidden">
        <StatusBar time="9:06" className="bg-[#216df3]" />
        <AppBar />
        <Note emoji="✏️" title="Create notes and folders" body={CREATE_TEXT} />
        <EmojiKeyboard active={3} items={FOOD} />
        <NavBar />
      </section>

      <section className="relative ml-px flex w-[1114px] flex-col overflow-hidden">
        <StatusBar time="9:04" className="bg-[#061631]" />
        <div className="relative flex min-h-0 flex-1 flex-col">
          <AppBar menu />
          <div className="flex min-h-0 flex-1 flex-col overflow-hidden">
            <div className="ml-[-47px] mt-[29px] flex h-[132px] shrink-0 items-start whitespace-pre text-[65px] font-bold leading-[76px] text-[#03a9f8]">
              Home
              <Chevron className="ml-[37px] mt-[20px] h-[32px] w-[20px]" />
              <span className="ml-[33px]">User Guide</span>
            </div>
            <ListItem folder emoji="🍏" title="How to use folders" className="h-[119px]" />
            <ListItem className="h-[260px]" emoji="✏️" title="Create notes and folders" lines={["You can create new notes (plaintext or checklist) and"]} />
            <ListItem className="h-[269.700px]" emoji="📋" title="">
              <div className="flex w-[949px] flex-col items-end text-[38px] leading-[44.350px]">
                <span className="mr-[25px]">u</span>
                <span className="mt-[15px] size-[27px] border-2 border-[#212121]" />
              </div>
            </ListItem>
            <ListItem className="h-[259.500px]" emoji="🦁" title="Use Emojis as visual cues" lines={["Every note and every folder is assigned an Emoji. Use", "this Emoji to visually represent the contents of the note", "or folder.…"]} />
            <ListItem className="h-[171.500px]" emoji="🥬" title="Folders are always at the top" lines={["And the folder name is shown in green."]} />
            <ListItem className="h-[171.500px]" emoji="🦊" title="Create nested folders" lines={["You can create any number of notes and folders inside a"]} />
          </div>
          <div className="absolute inset-0 bg-black/80" />
        </div>
        <EmojiKeyboard active={2} items={ANIMALS} />
        <NavBar />
        <Dialog />
      </section>

      <section className="flex w-[1114px] flex-col overflow-hidden">
        <StatusBar time="9:09" className="bg-[#216df3]" />
        <AppBar />
        <Note emoji="💾" title="Import and export feature" body={EXPORT_TEXT} />
        <NavBar dark />
      </section>
    </div>
  );
}
